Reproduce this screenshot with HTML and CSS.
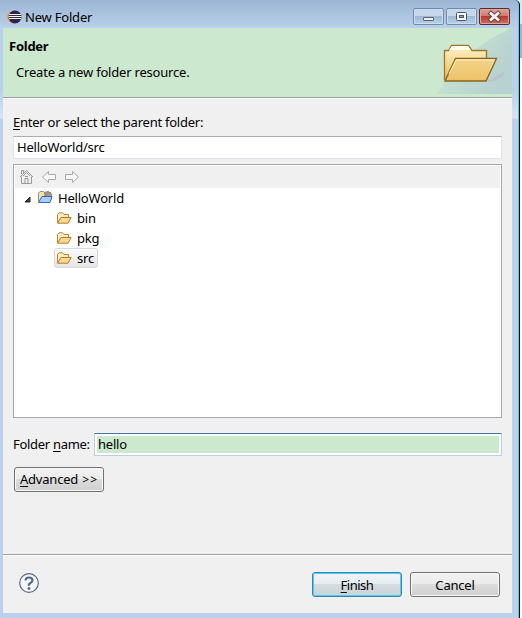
FILE: index.html
```html
<!DOCTYPE html>
<html lang="en">
<head>
<meta charset="utf-8">
<title>New Folder</title>
<link rel="stylesheet" href="styles.css">
</head>
<body>
<svg class="defs" width="0" height="0" aria-hidden="true">
  <defs>
    <linearGradient id="gold" x1="0" y1="0" x2="0" y2="1"><stop offset="0" stop-color="#fff3c8"/><stop offset="1" stop-color="#e9bd5e"/></linearGradient>
    <symbol id="folder" viewBox="0 0 16 16">
      <path d="M1.500 13V4.500L3 2.800h3.500L8 4.500h4.500v3" fill="#fdecc0" stroke="#bd8434"/>
      <path d="M1.500 13.200L5 7.500h10.200L12 13.200z" fill="#f9d98f" stroke="#b9772a"/>
    </symbol>
  </defs>
</svg>
<div class="screen">
<main class="window">
  <header class="titlebar">
    <svg class="logo" width="15" height="14" viewBox="0 0 15 14"><circle cx="6.500" cy="7" r="6.300" fill="#f59a3b"/><circle cx="8" cy="7" r="6.500" fill="#2c2455"/><path d="M2 4.500h12M1.500 6.500h13M2 8.500h12" stroke="#fff" stroke-width="1"/></svg>
    <span class="caption">New Folder</span>
    <div class="controls">
      <span class="control"><svg width="29" height="15"><rect x="9.500" y="8.500" width="10" height="3" rx=".5" fill="#eee" stroke="#596574"/></svg></span>
      <span class="control"><svg width="29" height="15"><rect x="9.500" y="3.500" width="10" height="8" rx="1" fill="#f4f4f4" stroke="#4b5668"/><rect x="12.500" y="6.500" width="4" height="2" fill="#87a9ce" stroke="#4b5668"/></svg></span>
      <span class="control close"><svg width="29" height="15"><path d="M11 4.500l7 6M18 4.500l-7 6" stroke="#5d3f4b" stroke-width="4.600" stroke-linecap="square"/><path d="M11 4.500l7 6M18 4.500l-7 6" stroke="#f4f4f4" stroke-width="2.700" stroke-linecap="square"/></svg></span>
    </div>
  </header>
  <div class="client">
    <section class="banner">
      <div class="banner-text"><h1>Folder</h1><p>Create a new folder resource.</p></div>
      <svg class="banner-art" width="75" height="66" viewBox="0 0 75 66">
        <defs><linearGradient id="haze" x1="0" y1="0" x2="1" y2=".5"><stop offset="0" stop-color="#cce8cf"/><stop offset="1" stop-color="#b7d2d0"/></linearGradient></defs>
        <path d="M0 66Q28 20 75 0v66z" fill="url(#haze)"/>
        <path d="M50 53L68 43q-1 8-17 11z" fill="#b9adc0" opacity=".4"/>
        <path d="M7.500 52V22.500h4l3-5h17l3.500 5h14.500V36" fill="url(#gold)" stroke="#9c772d" stroke-width="1.300"/>
        <path d="M12 22l3-4h16l2.500 4z" fill="#fffdf0"/>
        <path d="M8 53L18.500 30.500h41L49 53z" fill="url(#gold)" stroke="#8b631d" stroke-width="1.400"/>
        <path d="M10.500 51L19.500 32h37.500L48 51.500z" fill="#eec56f" opacity=".7"/>
        <path d="M12 46L19 32h38" fill="none" stroke="#fff1bd"/>
      </svg>
    </section>
    <section class="form">
      <label class="parent-label"><u>E</u>nter or select the parent folder:</label>
      <div class="field">HelloWorld/src</div>
      <div class="browser">
        <div class="toolbar">
          <svg width="15" height="16" viewBox="0 0 15 16" fill="none" stroke="#999"><path d="M1 8l6.500-6.500L14 8M2.500 7.500v7h10v-7M2.500 5V1.500h2V4"/><path d="M4 7l3.500-3.500L11 7M6 14V9.500h3V14M6 7.500h3"/></svg>
          <svg width="16" height="14" viewBox="0 0 16 14" fill="#f7f7f7" stroke="#aaa"><path d="M1.500 7l6-5.500v3h7v5h-7v3z"/></svg>
          <svg width="16" height="14" viewBox="0 0 16 14" fill="#f7f7f7" stroke="#aaa"><path d="M14.500 7l-6-5.500v3h-7v5h7v3z"/></svg>
        </div>
        <div class="row root">
          <svg class="twisty" width="7" height="7"><path d="M6 1v5H1z" fill="#444" stroke="#222"/></svg>
          <svg width="16" height="14" viewBox="0 0 16 14"><path d="M1.500 11V3L3 1.500h3.500L8 3v8z" fill="#fbe2a0" stroke="#7b91b7"/><path d="M8 7V2.500q1-2 2 0 1-3 2 0 2-1 2.500 2V9z" fill="#a99686" stroke="#77695e" stroke-width=".7"/><path d="M1.500 12.500L5 6.500h10L13 12.500z" fill="#a9cdf3" stroke="#3b66ad"/></svg>
          <span>HelloWorld</span>
        </div>
        <div class="row child"><svg width="16" height="16"><use href="#folder"/></svg><span>bin</span></div>
        <div class="row child"><svg width="16" height="16"><use href="#folder"/></svg><span>pkg</span></div>
        <div class="row child selected"><svg width="16" height="16"><use href="#folder"/></svg><span>src</span></div>
      </div>
      <div class="name-row"><label>Folder <u>n</u>ame:</label><div class="name-field"><div>hello</div></div></div>
      <button class="button advanced"><u>A</u>dvanced <span class="chevrons">&gt;&gt;</span></button>
    </section>
    <footer class="actions">
      <svg class="help" width="20" height="20" viewBox="0 0 20 20"><circle cx="10" cy="10" r="9.300" fill="#f5f7fa" stroke="#56698c" stroke-width="1.200"/><path d="M6.500 7.400Q6.700 4.500 10 4.500t3.500 2.700Q13.500 9 11.500 10T10 12.700" fill="none" stroke="#56698c" stroke-width="2.200"/><circle cx="10" cy="15.500" r="1.400" fill="#56698c"/></svg>
      <button class="button default"><u>F</u>inish</button>
      <button class="button">Cancel</button>
    </footer>
  </div>
</main>
<div class="backdrop"></div>
</div>
</body>
</html>
```
FILE: styles.css
```css
* { box-sizing: border-box; }
body { margin: 0; font: 13px/20px "Noto Sans", sans-serif; letter-spacing: -.2px; color: #000; overflow: hidden; }
svg { display: block; flex: none; }
.defs { position: absolute; }
u { text-decoration: underline; text-decoration-thickness: 1px; text-underline-offset: 2px; }
.screen { display: flex; width: 522px; height: 618px; }
.window { width: 520px; height: 618px; padding: 0 6px 5px 3px; display: flex; flex-direction: column; border-right: 1px solid #000; box-shadow: inset -1px 0 #43d3f6; background: linear-gradient(#9bb5d3, #b9d1ea 28px, #b9d1ea 90px, #d7e5f4 118px, #b9d1ea 119px); border-radius: 0 5px 0 0; }
.backdrop { width: 2px; background: linear-gradient(#d8e6f4 0 24px, #9eb5cf 24px 58px, #fff 58px); }
.titlebar { height: 28px; display: flex; padding: 8px 3px 0 4px; }
.logo { margin-top: 2px; }
.caption { margin: -1px 0 0 3px; }
.controls { display: flex; gap: 2px; margin-left: auto; }
.control { width: 31px; height: 17px; border: 1px solid #718ba9; border-radius: 2px; background: linear-gradient(#c5d8eb 48%, #9eb9d5 50%, #b9d0e8); box-shadow: inset 0 0 0 1px #cadef0; }
.control svg { width: 29px; height: 15px; }
.close { border-color: #5b2931; background: linear-gradient(#dca498 0, #ce776a 47%, #b43d2e 50%, #ca7160); box-shadow: inset 0 0 0 1px #dda49a; }
.client { width: 509px; height: 585px; display: flex; flex-direction: column; background: #f0f0f0; }
.banner { height: 71px; flex: none; display: flex; justify-content: space-between; background: #cce8cf; border-bottom: 1px solid #fff; box-shadow: inset 0 -1px #a0a0a0; }
.banner-text { padding: 8px 0 0 6px; }
h1 { margin: 0; font-size: 13px; line-height: 20px; letter-spacing: -.25px; }
p { margin: 6px 0 0 7px; line-height: 20px; }
.form { flex: 1; padding: 13px 10px 0; }
.parent-label { display: block; height: 24px; letter-spacing: -.24px; }
.field { height: 23px; border: 1px solid #e2e3ea; border-top-color: #abadb3; background: #fff; padding: 0 3px; }
.browser { height: 254px; margin-top: 5px; border: 1px solid #a5a8ae; padding: 1px; background: #fff; }
.toolbar { height: 22px; display: flex; align-items: center; gap: 7px; padding-left: 4px; background: #f0f0f0; }
.row { height: 20px; display: flex; align-items: center; }
.row span { margin-top: -1px; }
.root { padding-left: 9px; }
.root svg + svg { margin: -3px 5px 0 6px; }
.twisty { margin-top: 2px; }
.child { margin-left: 39px; width: 44px; padding-left: 1px; border: 1px solid transparent; gap: 5px; }
.selected { background: linear-gradient(#fafafa, #e5e5e5); border-color: #d9d9d9; border-radius: 3px; }
.name-row { display: flex; align-items: center; justify-content: space-between; height: 23px; margin-top: 15px; }
.name-row label { margin-top: -1px; letter-spacing: -.3px; }
.name-field { width: 408px; height: 23px; border: 1px solid #b5cfe7; border-top-color: #3d7bad; border-radius: 1px; background: #fff; padding: 2px; }
.name-field div { height: 17px; line-height: 17px; padding-left: 1px; background: #cce8cf; }
.button { width: 90px; height: 25px; padding: 0; font: inherit; letter-spacing: -.2px; line-height: 22px; color: #000; border: 1px solid #707070; border-radius: 3px; background: linear-gradient(#f2f2f2, #ebebeb 48%, #dddddd 50%, #cfcfcf); box-shadow: inset 0 0 0 1px #fafafa; }
.advanced { display: block; margin: 11px 0 0 1px; }
.chevrons { margin-left: 1px; font-size: 12px; letter-spacing: 1px; }
.default { border-color: #3c7fb1; background: linear-gradient(#f0f4f5, #e5edf0 48%, #d3dcdf 50%, #ccd3d5); box-shadow: inset 0 0 0 1px #48d1f5; letter-spacing: -.5px; }
.actions { height: 59px; flex: none; display: flex; gap: 8px; padding: 17px 12px 0 16px; border-top: 1px solid #a0a0a0; box-shadow: inset 0 1px #fff; }
.help { margin: 1px auto 0 0; }
```
